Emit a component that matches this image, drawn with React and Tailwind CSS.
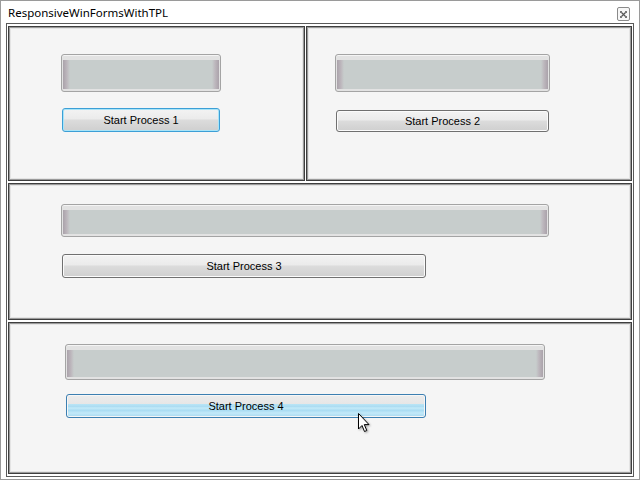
import React from "react";

const font = { fontFamily: '"Liberation Sans", Arial, sans-serif' };

function ProgressBar({ className }) {
  return (
    <div
      className={`rounded-[3px] border border-[#a4a4a4] bg-[#e2e2e2] pt-[5px] pb-[2px] px-[1px] shadow-[inset_0_1px_0_#f4f4f4] ${className}`}
    >
      <div className="h-full bg-[linear-gradient(to_right,#aaa2aa,#bdb7bd_4px,#c7cdcc_7px,#c7cdcc_calc(100%_-_7px),#bdb7bd_calc(100%_-_4px),#aaa2aa)]" />
    </div>
  );
}

function Button({ label, variant = "normal", className }) {
  let cls =
    "border-[#707070] bg-[linear-gradient(#f3f3f3,#ebebeb_45%,#dcdcdc_50%,#cfcfcf)] shadow-[inset_0_0_0_1px_#fbfbfb]";
  if (variant === "focus")
    cls =
      "border-[#3c9fd6] bg-[linear-gradient(#f3f3f3,#ebebeb_45%,#dcdcdc_50%,#cfcfcf)] shadow-[inset_0_0_0_1px_#a8e4f8]";
  if (variant === "hover")
    cls =
      "border-[#3c7fb1] bg-[linear-gradient(#ececec,#e6e6e6_42%,#b8e4f6_42%,#a9dbf1_55%,#c6ecfa_58%,#aadcf2_70%,#c2e9f9_82%,#a5d8ef)] shadow-[inset_0_0_0_1px_#f6f6f6]";
  return (
    <div
      className={`flex items-center justify-center rounded-[3px] border text-[11px] text-black ${cls} ${className}`}
      style={font}
    >
      {label}
    </div>
  );
}

function Panel({ className, children }) {
  return (
    <div
      className={`border border-[#3e3e3e] bg-[#f5f5f5] shadow-[inset_0_0_0_1px_#9a9a9a,inset_0_0_0_2px_#e4e4e4] ${className}`}
    >
      {children}
    </div>
  );
}

export default function App() {
  return (
    <div
      className="relative flex h-[480px] w-[640px] flex-col overflow-hidden border border-[#9a9a9a] bg-white"
      style={font}
    >
      <div className="flex h-[22px] items-center justify-between pl-[7px] pr-[9px]">
        <span
          className="pt-[2px] text-[11.5px] text-black"
          style={{ fontFamily: '"Segoe UI", "Noto Sans", "Open Sans", sans-serif' }}
        >
          ResponsiveWinFormsWithTPL
        </span>
        <div className="mt-[4px] flex h-[14px] w-[13px] items-center justify-center rounded-[2px] border border-[#8a8a8a] bg-[#f7f7f7]">
          <svg width="7" height="7" viewBox="0 0 7 7">
            <path d="M0.5 0.5L6.5 6.5M6.5 0.5L0.5 6.5" stroke="#555" strokeWidth="1.2" />
            <rect x="0" y="0" width="2" height="2" fill="#777" />
            <rect x="5" y="0" width="2" height="2" fill="#777" />
            <rect x="0" y="5" width="2" height="2" fill="#777" />
            <rect x="5" y="5" width="2" height="2" fill="#777" />
          </svg>
        </div>
      </div>

      <div className="mx-[5px] mb-[2px] flex flex-1 flex-col gap-[2px] border border-[#5a5a5a] bg-white px-[1px] py-[2px]">
        <div className="flex h-[155px] gap-[1px]">
          <Panel className="flex w-[297px] flex-col pl-[52px] pt-[27px]">
            <ProgressBar className="h-[38px] w-[160px]" />
            <Button label="Start Process 1" variant="focus" className="ml-[1px] mt-[16px] h-[24px] w-[158px]" />
          </Panel>
          <Panel className="flex flex-1 flex-col pl-[28px] pt-[27px]">
            <ProgressBar className="h-[38px] w-[215px]" />
            <Button label="Start Process 2" className="ml-[1px] mt-[18px] h-[22px] w-[213px]" />
          </Panel>
        </div>
        <Panel className="flex h-[137px] flex-col pl-[52px] pt-[20px]">
          <ProgressBar className="h-[33px] w-[488px]" />
          <Button label="Start Process 3" className="ml-[1px] mt-[17px] h-[24px] w-[364px]" />
        </Panel>
        <Panel className="flex flex-1 flex-col pl-[56px] pt-[21px]">
          <ProgressBar className="h-[36px] w-[480px]" />
          <Button label="Start Process 4" variant="hover" className="ml-[1px] mt-[14px] h-[24px] w-[360px]" />
        </Panel>
      </div>

      <svg
        className="absolute left-[357px] top-[412px]"
        width="14"
        height="22"
        viewBox="0 0 14 22"
        style={{ filter: "drop-shadow(1px 1px 1px rgba(0,0,0,0.35))" }}
      >
        <path
          d="M0.5 0.5 L0.5 16 L4 12.5 L6.5 18.5 L8.8 17.5 L6.3 11.6 L11 11.6 Z"
          fill="white"
          stroke="black"
          strokeWidth="1"
          strokeLinejoin="round"
        />
      </svg>
    </div>
  );
}
